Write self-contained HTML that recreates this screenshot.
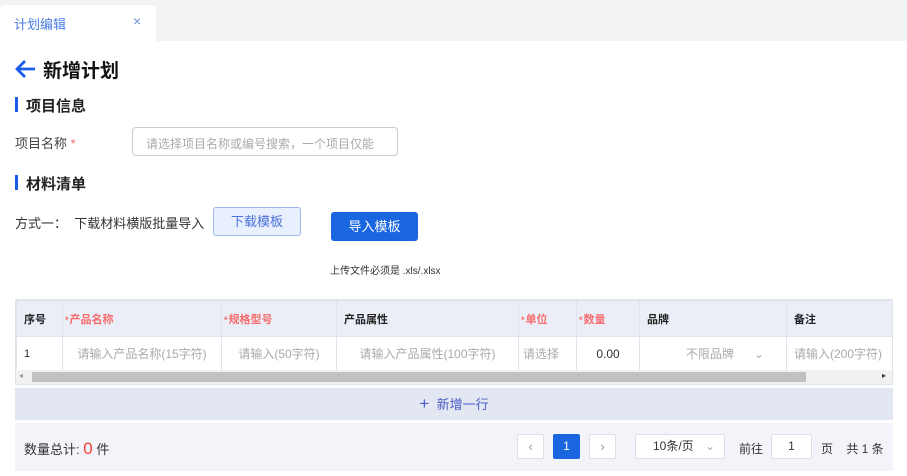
<!DOCTYPE html>
<html><head><meta charset="utf-8"><style>
*{box-sizing:border-box;margin:0;padding:0}
body{width:907px;height:476px;background:#fff;font-family:"Liberation Sans","Noto Sans CJK SC",sans-serif;color:#333;position:relative;overflow:hidden;font-size:13px}
.a{position:absolute}
.topbar{left:0;top:0;width:907px;height:41px;background:#f2f3f5}
.tab{left:0;top:5px;width:156px;height:36px;background:#fff;border-radius:4px 4px 0 0}
.sec{font-size:15px;font-weight:bold;color:#222}
.sec:before{content:"";position:absolute;left:-11px;top:2px;width:3px;height:15px;background:#1a5ee8}
.ph{color:#aaa;font-size:12px}
table{border-collapse:collapse;font-size:11px}
td{border:1px solid #dfe3ec;height:34px;padding:0 7px;white-space:nowrap;overflow:hidden}
tr.h td{background:#ebeef7;font-weight:bold;height:36px;color:#222}
tr.h td.r{color:#f56c6c;padding-left:2px}
.r:before{content:"*";font-size:9px;margin-right:1px}
.btn{border:1px solid #dcdfe6;border-radius:2px;background:#fff;text-align:center;color:#999;font-size:13px}
</style></head><body>
<div class="a topbar"></div>
<div class="a tab"></div>
<div class="a" style="left:14px;top:14px;font-size:13px;color:#4a7de0">计划编辑</div>
<div class="a" style="left:133px;top:13px;font-size:14px;color:#6d8fd8">×</div>
<svg class="a" style="left:15px;top:59px" width="22" height="20" viewBox="0 0 22 20"><path d="M20 10H3M10 2L2 10l8 8" stroke="#1a5ee8" stroke-width="2.8" fill="none"/></svg>
<div class="a" style="left:43px;top:56px;font-size:19px;font-weight:bold;color:#111">新增计划</div>
<div class="a sec" style="left:26px;top:95px">项目信息</div>
<div class="a" style="left:15px;top:133px;font-size:13px;color:#444">项目名称 <span style="color:#f56c6c">*</span></div>
<div class="a" style="left:132px;top:127px;width:266px;height:29px;border:1px solid #c8ccd3;border-radius:4px;padding:7px 13px" ><span class="ph">请选择项目名称或编号搜索，一个项目仅能</span></div>
<div class="a sec" style="left:26px;top:173px">材料清单</div>
<div class="a" style="left:15px;top:213px;font-size:13px;color:#333">方式一：&nbsp;&nbsp;下载材料横版批量导入</div>
<div class="a" style="left:213px;top:207px;width:88px;height:29px;border:1px solid #9db7ea;background:#e8effd;border-radius:3px;color:#4a73d8;text-align:center;line-height:27px;font-size:13px">下载模板</div>
<div class="a" style="left:331px;top:212px;width:87px;height:29px;background:#1a66e0;border-radius:3px;color:#fff;text-align:center;line-height:29px;font-size:13px">导入模板</div>
<div class="a" style="left:330px;top:262px;font-size:10px;color:#333">上传文件必须是 .xls/.xlsx</div>
<div class="a" style="left:15px;top:299px;width:878px;height:86px;border:1px solid #dfe3ec;overflow:hidden">
<table style="width:877px;table-layout:fixed">
<colgroup><col style="width:46px"><col style="width:159px"><col style="width:115px"><col style="width:182px"><col style="width:58px"><col style="width:63px"><col style="width:147px"><col style="width:107px"></colgroup>
<tr class="h"><td>序号</td><td class="r">产品名称</td><td class="r">规格型号</td><td>产品属性</td><td class="r">单位</td><td class="r">数量</td><td>品牌</td><td>备注</td></tr>
<tr><td>1</td><td class="ph" style="text-align:center">请输入产品名称(15字符)</td><td class="ph" style="text-align:center">请输入(50字符)</td><td class="ph" style="text-align:center">请输入产品属性(100字符)</td><td class="ph" style="padding:0 4px">请选择</td><td style="text-align:center;font-size:12px">0.00</td><td class="ph" style="text-align:right;padding-right:22px">不限品牌 &nbsp;&nbsp;&nbsp;&nbsp;&nbsp;⌄</td><td class="ph">请输入(200字符)</td></tr>
</table>
<div class="a" style="left:0;top:70px;width:878px;height:14px;background:#f1f1f1"></div>
<div class="a" style="left:16px;top:72px;width:774px;height:10px;background:#c1c1c1"></div>
<div class="a" style="left:3px;top:71px;font-size:8px;color:#999">◂</div>
<div class="a" style="left:866px;top:71px;font-size:8px;color:#333">▸</div>
</div>
<div class="a" style="left:15px;top:388px;width:878px;height:32px;background:#e3e7f1;text-align:center;line-height:32px;color:#4a5cc8;font-size:13px"><span style="font-size:17px">+</span>&nbsp; 新增一行</div>
<div class="a" style="left:15px;top:423px;width:878px;height:48px;background:#f3f4fa"></div>
<div class="a" style="left:24px;top:439px;font-size:13px;color:#333">数量总计: <span style="color:#f04040;font-size:17px">0</span> 件</div>
<div class="a btn" style="left:517px;top:434px;width:27px;height:25px;line-height:23px">‹</div>
<div class="a" style="left:553px;top:434px;width:27px;height:25px;background:#1a66e0;color:#fff;text-align:center;line-height:25px;font-size:12px;border-radius:2px">1</div>
<div class="a btn" style="left:589px;top:434px;width:27px;height:25px;line-height:23px">›</div>
<div class="a btn" style="left:635px;top:434px;width:90px;height:25px;line-height:23px;color:#333;font-size:12px;text-align:left;padding-left:17px">10条/页 <span style="position:absolute;right:9px;color:#aaa">⌄</span></div>
<div class="a" style="left:739px;top:440px;font-size:12px">前往</div>
<div class="a btn" style="left:771px;top:434px;width:41px;height:25px;line-height:23px;color:#333;font-size:12px;border-radius:3px">1</div>
<div class="a" style="left:821px;top:440px;font-size:12px">页&nbsp;&nbsp;&nbsp;&nbsp;共 1 条</div>
</body></html>
